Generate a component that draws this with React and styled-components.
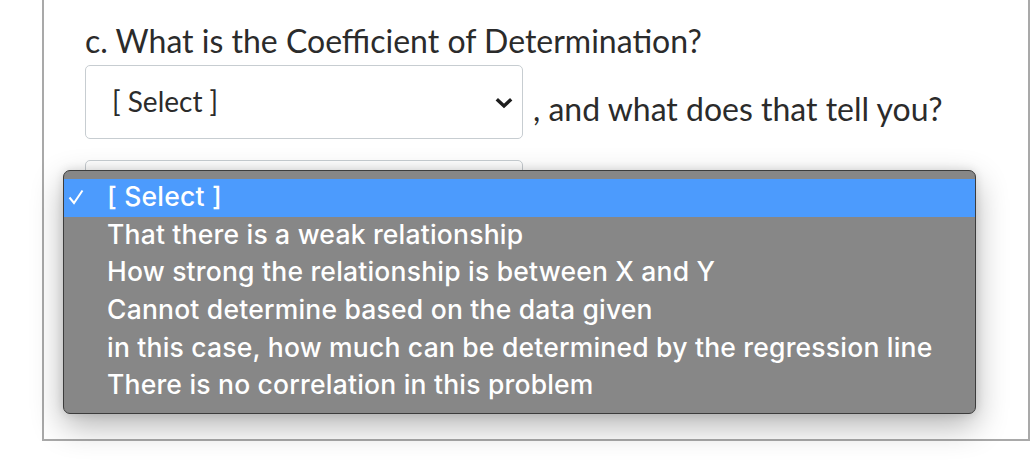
import React from "react";
import styled, { createGlobalStyle } from "styled-components";

const Global = createGlobalStyle`
  html, body {
    margin: 0;
    padding: 0;
    background: #fff;
  }
  body {
    width: 1034px;
    height: 462px;
    overflow: hidden;
    font-family: Lato, "Open Sans", sans-serif;
  }
`;

const Page = styled.div`
  position: relative;
  width: 1034px;
  height: 462px;
`;

const Card = styled.div`
  margin-left: 42px;
  box-sizing: border-box;
  width: 988px;
  height: 441px;
  border: 2px solid #a9a9a9;
  border-top: none;
  padding: 21px 0 0 41px;
`;

const Question = styled.div`
  font-size: 32px;
  color: #2b2b2b;
  line-height: 40px;
  margin-bottom: 4px;
`;

const Row = styled.div`
  display: flex;
  align-items: center;
  gap: 10px;
  margin-bottom: 21px;
`;

const SelectBox = styled.div`
  width: 438px;
  height: 74px;
  box-sizing: border-box;
  border: 1px solid #c7cdd1;
  border-radius: 5px;
  background: #fff;
  display: flex;
  align-items: center;
  justify-content: space-between;
  padding: 0 9px 0 26px;
  font-size: 28px;
  color: #2b2b2b;
`;

const SelectLabel = styled.span`
  margin-top: -2px;
`;

const Chevron = styled.svg`
  width: 18px;
  height: 12px;
  margin-top: 2px;
`;

const Trailing = styled.span`
  font-size: 32px;
  color: #2b2b2b;
  margin-top: 12px;
`;

const Menu = styled.div`
  position: absolute;
  left: 63px;
  top: 170px;
  width: 913px;
  height: 244px;
  box-sizing: border-box;
  padding-top: 8px;
  background: #878787;
  border: 1px solid #3c3c3c;
  border-radius: 7px;
  box-shadow: 0 12px 32px rgba(0, 0, 0, 0.3), 0 0 10px rgba(0, 0, 0, 0.12);
  font-family: Inter, Roboto, sans-serif;
`;

const Option = styled.div`
  height: 37.6px;
  box-sizing: border-box;
  padding: 0 0 3px 43px;
  display: flex;
  align-items: center;
  position: relative;
  background: ${(p) => (p.$active ? "#4c9bfd" : "transparent")};
  color: #fff;
  font-size: 26.5px;
  font-weight: 500;
  letter-spacing: 0.2px;
  white-space: nowrap;
`;

const Check = styled.svg`
  position: absolute;
  left: 4px;
  top: 10px;
  width: 16px;
  height: 16px;
`;

const options = [
  "[ Select ]",
  "That there is a weak relationship",
  "How strong the relationship is between X and Y",
  "Cannot determine based on the data given",
  "in this case, how much can be determined by the regression line",
  "There is no correlation in this problem",
];

export default function App() {
  return (
    <Page>
      <Global />
      <Card>
        <Question>c. What is the Coefficient of Determination?</Question>
        <Row>
          <SelectBox>
            <SelectLabel>[ Select ]</SelectLabel>
            <Chevron viewBox="0 0 18 12">
              <path d="M1.8 2.2 L9 9 L16.2 2.2" fill="none" stroke="#1e1e1e" strokeWidth="3.4" />
            </Chevron>
          </SelectBox>
          <Trailing>, and what does that tell you?</Trailing>
        </Row>
        <SelectBox />
      </Card>
      <Menu>
        {options.map((o, i) => (
          <Option key={o} $active={i === 0}>
            {i === 0 && (
              <Check viewBox="0 0 16 16">
                <path d="M1.5 8.5 L6 14 L14.5 1.5" fill="none" stroke="#fff" strokeWidth="2" />
              </Check>
            )}
            {o}
          </Option>
        ))}
      </Menu>
    </Page>
  );
}
